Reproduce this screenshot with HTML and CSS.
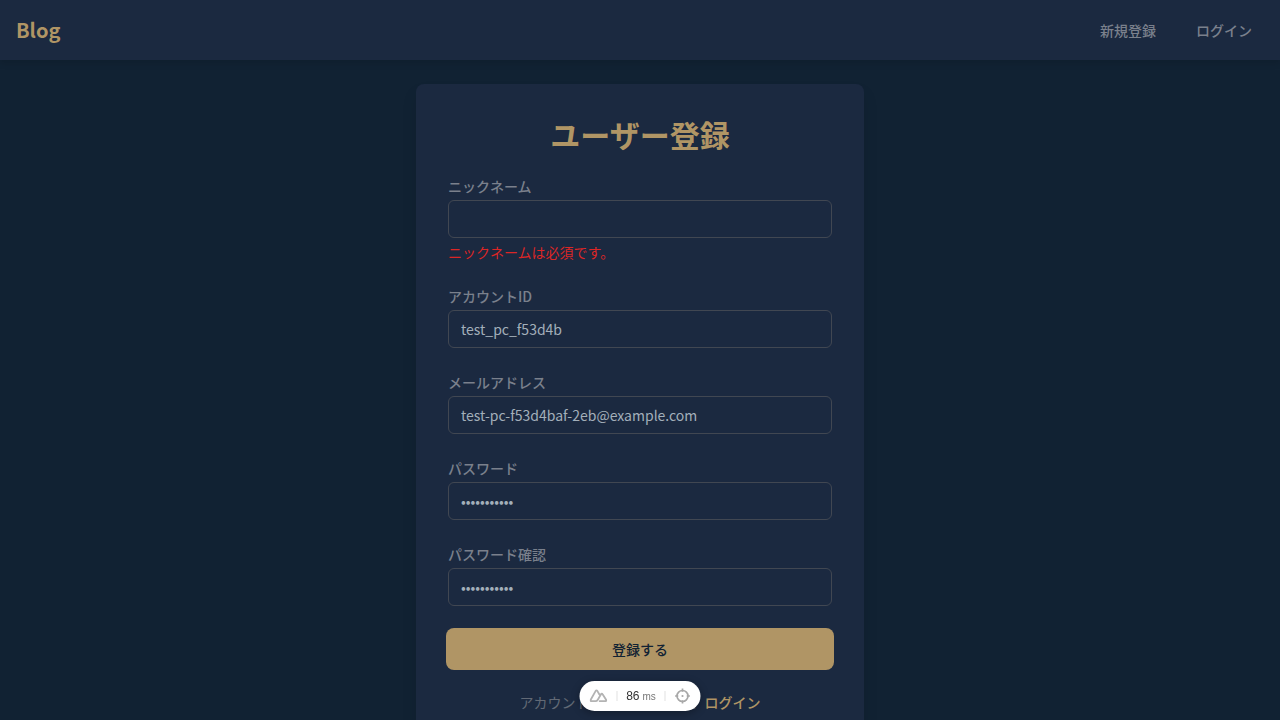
FILE: index.html
```html
<!DOCTYPE html>
<html lang="ja">
<head>
<meta charset="utf-8">
<meta name="viewport" content="width=device-width, initial-scale=1">
<title>ユーザー登録 - Blog</title>
<link rel="stylesheet" href="styles.css">
</head>
<body class="page">
<header class="header">
  <a class="brand" href="#">Blog</a>
  <nav class="nav">
    <a class="nav-link" href="#">新規登録</a>
    <a class="nav-link" href="#">ログイン</a>
  </nav>
</header>
<main class="main">
  <section class="card">
    <h1 class="title">ユーザー登録</h1>
    <form class="form">
      <div class="field">
        <label class="label" for="nickname">ニックネーム</label>
        <input class="input" id="nickname" type="text" aria-describedby="nickname-error">
        <p class="error" id="nickname-error">ニックネームは必須です。</p>
      </div>
      <div class="field">
        <label class="label" for="account">アカウントID</label>
        <input class="input" id="account" type="text" value="test_pc_f53d4b">
      </div>
      <div class="field">
        <label class="label" for="email">メールアドレス</label>
        <input class="input" id="email" type="email" value="test-pc-f53d4baf-2eb@example.com">
      </div>
      <div class="field">
        <label class="label" for="password">パスワード</label>
        <input class="input" id="password" type="password" value="password123">
      </div>
      <div class="field">
        <label class="label" for="confirm">パスワード確認</label>
        <input class="input" id="confirm" type="password" value="password123">
      </div>
      <button class="submit" type="button">登録する</button>
    </form>
    <p class="switch">アカウントをお持ちですか？ <a class="switch-link" href="#">ログイン</a></p>
  </section>
</main>
<aside class="devtools">
  <button class="tool" type="button" aria-label="DevTools">
    <svg width="18" height="14" viewBox="0 0 18 14" fill="none" stroke="#b3b3b3" stroke-width="1.8" stroke-linejoin="round" stroke-linecap="round"><path d="M10.2 12.2h5.6c.8 0 1.2-.7.8-1.4l-3.5-5.6c-.4-.7-1.2-.7-1.6 0L8.3 10.7c-.6 1-1.1 1.5-2.3 1.5H2c-.8 0-1.2-.7-.8-1.4L6.2 1.9c.4-.7 1.2-.7 1.6 0l2.1 3.6"/></svg>
  </button>
  <span class="divider"></span>
  <span class="time">86 <small class="unit">ms</small></span>
  <span class="divider"></span>
  <button class="tool" type="button" aria-label="Inspector">
    <svg width="16" height="16" viewBox="0 0 16 16" fill="none" stroke="#a8a8a8" stroke-width="1.7"><circle cx="8" cy="8" r="5.5"/><path d="M8 .6v3.2M8 12.2v3.2M.6 8h3.2M12.2 8h3.2"/><circle cx="8" cy="8" r="1.1" fill="#a8a8a8" stroke="none"/></svg>
  </button>
</aside>
</body>
</html>
```

FILE: styles.css
```css
*, *::before, *::after { box-sizing: border-box; }

.page {
  margin: 0;
  min-height: 100vh;
  background: #112233;
  color: #9ca8b4;
  font-family: "Noto Sans CJK JP", sans-serif;
  font-size: 14px;
  line-height: 20px;
}

.header {
  display: flex;
  align-items: center;
  justify-content: space-between;
  height: 60px;
  padding: 0 16px;
  background: #1b2940;
  box-shadow: 0 4px 6px rgba(0, 0, 0, 0.1);
}

.brand {
  color: #b09565;
  font-size: 20px;
  font-weight: 700;
  line-height: 28px;
  text-decoration: none;
}

.nav { display: flex; gap: 16px; }

.nav-link {
  padding: 8px 12px;
  color: #7a808c;
  font-weight: 500;
  text-decoration: none;
}

.main {
  display: flex;
  justify-content: center;
  padding: 24px 16px;
}

.card {
  width: 100%;
  max-width: 448px;
  padding: 32px;
  border-radius: 8px;
  background: #1b2940;
  box-shadow: 0 10px 15px rgba(0, 0, 0, 0.1);
}

.title {
  margin: 0 0 24px;
  color: #b09565;
  font-size: 30px;
  font-weight: 700;
  line-height: 36px;
  text-align: center;
}

.form { display: flex; flex-direction: column; gap: 24px; }

.field { display: flex; flex-direction: column; gap: 4px; }

.label { color: #7a808c; font-weight: 500; }

.input {
  width: 100%;
  height: 38px;
  padding: 8px 12px;
  border: 1px solid #414752;
  border-radius: 6px;
  outline: none;
  background: transparent;
  color: #a3afba;
  font: inherit;
}

.error { margin: 0; color: #dc2626; }

.submit {
  height: 42px;
  margin: -2px;
  border: 0;
  border-radius: 8px;
  background: #b09565;
  color: #112233;
  font: inherit;
  font-weight: 500;
  cursor: pointer;
}

.switch { margin: 24px 0 0; color: #626975; text-align: center; }

.switch-link { color: #b09565; font-weight: 500; text-decoration: none; }

.devtools {
  position: fixed;
  bottom: 9px;
  left: 50%;
  display: flex;
  align-items: center;
  justify-content: space-between;
  width: 121px;
  height: 30px;
  padding: 0 10px;
  transform: translateX(-50%);
  border-radius: 15px;
  background: #fff;
  box-shadow: 0 2px 8px rgba(0, 0, 0, 0.3);
  font-family: "Liberation Sans", sans-serif;
}

.tool {
  display: flex;
  padding: 0;
  border: 0;
  background: none;
}

.divider { width: 1px; height: 10px; background: #e2e2e2; }

.time {
  display: flex;
  align-items: baseline;
  gap: 3px;
  color: #333;
  font-size: 12px;
}

.unit { color: #777; font-size: 10px; }
```
